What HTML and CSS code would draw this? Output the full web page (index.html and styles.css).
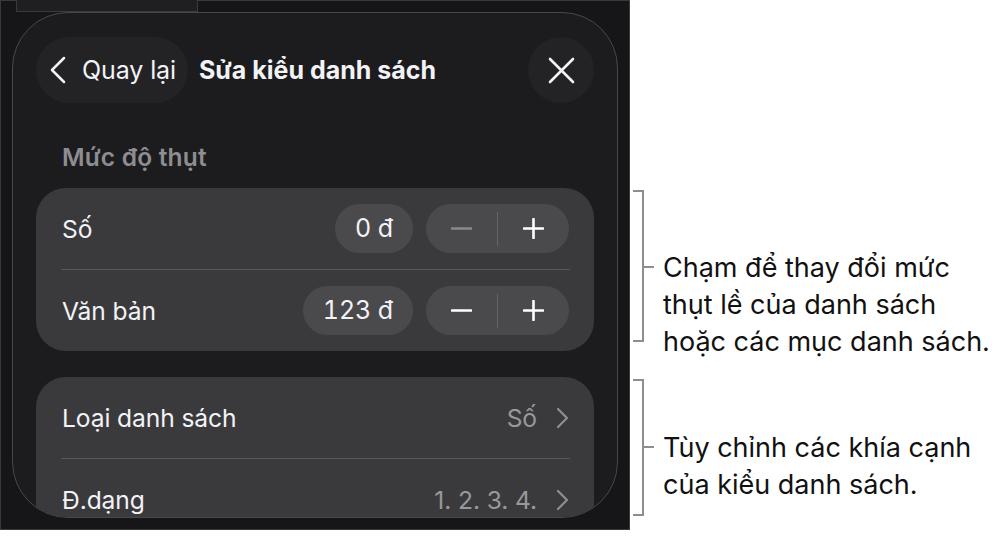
FILE: index.html
```html
<!DOCTYPE html>
<html lang="vi">
<head>
<meta charset="utf-8">
<title>Sửa kiểu danh sách</title>
<link rel="stylesheet" href="styles.css">
</head>
<body>
<div class="stage">
  <div class="device">
    <div class="bg-strip"></div>
    <div class="panel">
      <div class="header">
        <div class="back-btn">
          <svg class="back-chev" width="17" height="28" viewBox="0 0 17 28"><path d="M15 2 L3 14 L15 26" fill="none" stroke="#f2f2f7" stroke-width="2.5" stroke-linecap="round" stroke-linejoin="round"/></svg>
          <span>Quay lại</span>
        </div>
        <div class="title">Sửa kiểu danh sách</div>
        <div class="close-btn">
          <svg width="27" height="27" viewBox="0 0 27 27"><path d="M2 2 L25 25 M25 2 L2 25" fill="none" stroke="#f2f2f7" stroke-width="2.6" stroke-linecap="round"/></svg>
        </div>
      </div>

      <div class="section-label">Mức độ thụt</div>

      <div class="card">
        <div class="row">
          <span class="row-label">Số</span>
          <div class="row-right">
            <span class="value-pill">0 đ</span>
            <div class="stepper">
              <span class="step">
                <svg width="21" height="3" viewBox="0 0 21 3"><path d="M1 1.5 H20" stroke="#8a8a8e" stroke-width="2.6" stroke-linecap="round"/></svg>
              </span>
              <span class="step-div"></span>
              <span class="step">
                <svg width="21" height="21" viewBox="0 0 21 21"><path d="M1 10.5 H20 M10.5 1 V20" stroke="#fff" stroke-width="2.6" stroke-linecap="round"/></svg>
              </span>
            </div>
          </div>
        </div>
        <div class="divider"></div>
        <div class="row">
          <span class="row-label">Văn bản</span>
          <div class="row-right">
            <span class="value-pill">123 đ</span>
            <div class="stepper">
              <span class="step">
                <svg width="21" height="3" viewBox="0 0 21 3"><path d="M1 1.5 H20" stroke="#fff" stroke-width="2.6" stroke-linecap="round"/></svg>
              </span>
              <span class="step-div"></span>
              <span class="step">
                <svg width="21" height="21" viewBox="0 0 21 21"><path d="M1 10.5 H20 M10.5 1 V20" stroke="#fff" stroke-width="2.6" stroke-linecap="round"/></svg>
              </span>
            </div>
          </div>
        </div>
      </div>

      <div class="card card-second">
        <div class="row">
          <span class="row-label">Loại danh sách</span>
          <div class="row-right nav">
            <span class="nav-value">Số</span>
            <svg width="13" height="22" viewBox="0 0 13 22"><path d="M2 2 L11 11 L2 20" fill="none" stroke="#8e8e93" stroke-width="2.2" stroke-linecap="round" stroke-linejoin="round"/></svg>
          </div>
        </div>
        <div class="divider"></div>
        <div class="row">
          <span class="row-label">Đ.dạng</span>
          <div class="row-right nav">
            <span class="nav-value">1. 2. 3. 4.</span>
            <svg width="13" height="22" viewBox="0 0 13 22"><path d="M2 2 L11 11 L2 20" fill="none" stroke="#8e8e93" stroke-width="2.2" stroke-linecap="round" stroke-linejoin="round"/></svg>
          </div>
        </div>
      </div>
    </div>
  </div>

  <div class="notes">
    <div class="note note-one">
      <div class="bracket"></div>
      <p class="note-text">Chạm để thay đổi mức<br>thụt lề của danh sách<br>hoặc các mục danh sách.</p>
    </div>
    <div class="note note-two">
      <div class="bracket"></div>
      <p class="note-text">Tùy chỉnh các khía cạnh<br>của kiểu danh sách.</p>
    </div>
  </div>
</div>
</body>
</html>
```

FILE: styles.css
```css
* { box-sizing: border-box; }

html, body {
  margin: 0;
  padding: 0;
  background: #ffffff;
}

body {
  font-family: "Inter", "Roboto", "Noto Sans", sans-serif;
  width: 999px;
  height: 537px;
  overflow: hidden;
}

.stage {
  display: flex;
  align-items: flex-start;
}

.device {
  position: relative;
  width: 630px;
  height: 530px;
  background: #161618;
  border: 1px solid #3a3a3c;
  padding: 11px 0 0 11px;
  flex: none;
}

.bg-strip {
  position: absolute;
  left: 15px;
  top: -1px;
  width: 182px;
  height: 12px;
  background: #1f1f21;
  border: 1px solid #3a3a3c;
  border-top: none;
}

.panel {
  position: relative;
  width: 606px;
  height: 506px;
  background: #1c1c1e;
  border: 1px solid #48484a;
  border-radius: 56px;
  overflow: hidden;
  padding: 24px 23px 0 23px;
  color: #f2f2f7;
}

.header {
  display: flex;
  align-items: center;
  height: 66px;
}

.back-btn {
  display: flex;
  align-items: center;
  height: 66px;
  border-radius: 33px;
  background: #232325;
  padding: 0 12px 0 13px;
  gap: 16px;
  font-size: 25px;
  letter-spacing: -0.1px;
}

.back-chev { display: block; }

.title {
  margin-left: 11px;
  font-size: 25px;
  font-weight: 700;
  letter-spacing: 0;
}

.close-btn {
  margin-left: auto;
  width: 66px;
  height: 66px;
  border-radius: 50%;
  background: #232325;
  display: flex;
  align-items: center;
  justify-content: center;
}

.close-btn svg { display: block; }

.section-label {
  margin: 40px 0 17px 26px;
  height: 28px;
  line-height: 28px;
  font-size: 24.5px;
  font-weight: 600;
  color: #8d8d92;
  letter-spacing: 0.2px;
}

.card {
  background: #3a3a3c;
  border-radius: 30px;
}

.card-second {
  margin-top: 26px;
}

.row {
  height: 81px;
  display: flex;
  align-items: center;
  padding: 0 25px 0 26px;
  font-size: 24.6px;
  letter-spacing: -0.1px;
}

.row-label { color: #f2f2f7; }

.row-right {
  margin-left: auto;
  display: flex;
  align-items: center;
}

.value-pill {
  height: 49px;
  line-height: 49px;
  padding: 0 20px;
  border-radius: 25px;
  background: #4a4a4c;
  color: #f2f2f7;
  font-size: 25px;
  font-variant-numeric: tabular-nums;
}

.stepper {
  margin-left: 13px;
  width: 143px;
  height: 49px;
  border-radius: 25px;
  background: #4a4a4c;
  display: flex;
  align-items: center;
}

.step {
  flex: 1;
  display: flex;
  align-items: center;
  justify-content: center;
}

.step svg { display: block; }

.step-div {
  width: 1px;
  height: 34px;
  background: #656568;
}

.divider {
  height: 1px;
  margin: 0 24px 0 25px;
  background: #58585b;
}

.nav { gap: 19px; }

.nav-value { color: #98989d; }

.nav svg { display: block; }

.notes {
  margin-left: 3px;
  padding-top: 190px;
  display: flex;
  flex-direction: column;
}

.note {
  display: flex;
  align-items: flex-start;
}

.note-one { height: 152px; }

.note-two {
  height: 137px;
  margin-top: 37px;
}

.bracket {
  width: 11px;
  align-self: stretch;
  border: 2px solid #8e8e8e;
  border-left: none;
  flex: none;
}

.note-text {
  position: relative;
  margin: 0 0 0 19px;
  font-size: 27px;
  line-height: 37px;
  color: #111111;
  letter-spacing: 0;
  white-space: nowrap;
}

.note-one .note-text { margin-top: 59px; }
.note-two .note-text { margin-top: 50px; }

.note-text::before {
  content: "";
  position: absolute;
  left: -19px;
  top: 17px;
  width: 10px;
  height: 2px;
  background: #8e8e8e;
}
```
